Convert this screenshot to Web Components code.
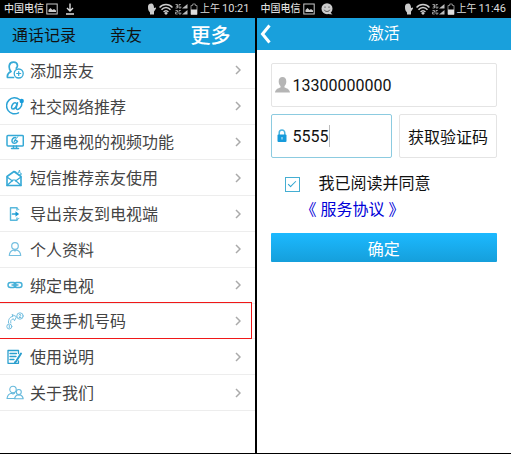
<!DOCTYPE html>
<html lang="zh-CN">
<head>
<meta charset="utf-8">
<meta name="viewport" content="width=device-width, initial-scale=1">
<title>更多 / 激活</title>
<style>
:root {
  --brand: #19a0dc;
  --line: #ededed;
  --text: #444;
}
body {
  margin: 0;
  background: #000;
  font-family: Roboto, "Noto Sans CJK SC", sans-serif;
  font-size: 16px;
  color: #111;
}
.screens {
  display: grid;
  grid-template-columns: 1fr 1fr;
  gap: 2px;
  min-height: 100vh;
  box-sizing: border-box;
  padding-bottom: 1px;
}
</style>
</head>
<body>
<main class="screens">
  <phone-screen time="10:21" notice="download">
    <tab-bar>
      <button>通话记录</button>
      <button>亲友</button>
      <button class="active">更多</button>
    </tab-bar>
    <menu-list>
      <menu-row icon="addFriend">添加亲友</menu-row>
      <menu-row icon="at">社交网络推荐</menu-row>
      <menu-row icon="monitor">开通电视的视频功能</menu-row>
      <menu-row icon="mail">短信推荐亲友使用</menu-row>
      <menu-row icon="exportTo">导出亲友到电视端</menu-row>
      <menu-row icon="person">个人资料</menu-row>
      <menu-row icon="link">绑定电视</menu-row>
      <menu-row icon="swap" marked>更换手机号码</menu-row>
      <menu-row icon="note">使用说明</menu-row>
      <menu-row icon="people">关于我们</menu-row>
    </menu-list>
  </phone-screen>
  <phone-screen time="11:46" notice="smile">
    <title-bar>激活</title-bar>
    <activate-form></activate-form>
  </phone-screen>
</main>

<script>
const line = (color, width) =>
  `fill="none" stroke="${color}" stroke-width="${width}" stroke-linecap="round" stroke-linejoin="round"`;

const ICONS = {
  addFriend: `<g ${line("#35a9d6", 1.7)}><path d="M7.500 16.500H1.500C.8 13.500 2 12 5 10.500C3 8.500 3 6.500 3.300 4.500C4 .2 10.800 0 11.500 4.300C11.500 6 11 6.500 10.300 7.200"/><circle cx="12.700" cy="12.500" r="4.500" stroke-width="1.300"/><path d="M12.700 10.500v4M10.700 12.500h4" stroke-width="1.200"/></g>`,
  at: `<g ${line("#2ba3d6", 1.5)}><path d="M13.500 2.500A8 8 0 1 0 12.500 15.800"/><path d="M11.500 5.800L10.300 10.500C9.800 13 12.300 12.900 14 11C15.500 9.500 16 8 15.800 6.500"/><path d="M10.900 7.500C10.500 5.500 8.200 5.200 6.700 7.200C5 9.500 5.200 12 7 12C8.800 12 10 10.500 10.500 8.500"/></g><circle cx="15.700" cy="4" r="2.200" fill="#179cdb"/>`,
  monitor: `<g ${line("#35a9d6", 1.5)}><rect x="1" y="2.500" width="16.300" height="10.500" rx="1"/><path d="M7.500 13v2M10.500 13v2M5.500 15.500h7"/><path d="M9.500 4.500C7 4.500 5.700 6.300 6 8.300S9.500 11.500 11.500 8.300L9.300 6.800L8.300 8.300"/><path d="M9.500 6L12 3.700" stroke-width="1"/></g>`,
  mail: `<g ${line("#35a9d6", 1.2)}><path d="M1 7.500L8 2.500L15 7.500V16.500H1Z" stroke-width="1.600"/><path d="M1 8l5.500 4M15 8l-5.500 4M1 16.500l6-5.500h2l6 5.500"/><path d="M9.500 2.500L12 4.500 13.500 1l.5 3 1.800 1L13 6" stroke-width=".8"/></g>`,
  exportTo: `<g ${line("#58b8dc", 1.4)}><path d="M11 5V2.800H4.500V15.200H11V13"/><path d="M11 2.800L13 4.800M11 15.200l2-2" stroke-width="1"/><path d="M6.500 9h5" stroke="#2ba3d6" stroke-width="1.700"/></g><path d="M9.500 6.300l3.500 2.700-3.500 2.700z" fill="#1698d2"/>`,
  person: `<g ${line("#74bfe0", 1.2)}><circle cx="9" cy="6" r="3.300"/><path d="M3.300 15.500C3.500 12 5 10.700 7.500 10L9 11l1.500-1C13 10.700 14.500 12 14.700 15.500Z"/></g>`,
  link: `<g ${line("#45b0d8", 1.4)}><rect x="2" y="6.500" width="8" height="5" rx="2.500"/><rect x="8" y="6.500" width="8" height="5" rx="2.500"/><path d="M6 9h6"/></g>`,
  swap: `<g ${line("#74bfe0", 1)}><circle cx="14" cy="4" r="3.200"/><circle cx="3.300" cy="14.500" r="2.500"/><path d="M13 3l1-.7 1 .9-2 2.300h2M3.300 13.300v2.500"/><path d="M2.500 11C2 7.500 4 4.500 7 4.500L6 2.500L10.500 4.700L8.500 8.700L7.500 6.800C5 7.300 4.200 9 4.800 11"/></g>`,
  note: `<g ${line("#2b9fce", 1.3)}><path d="M12.500 13V15.300H2V2.500H12.500V5.500"/><path d="M4 5.500h6.500M4 8.500h6M4 11.500h4"/><path d="M15 5.500L10 13.500l-1 .8" stroke-width="2"/></g>`,
  people: `<g ${line("#66b9dc", 1.1)}><circle cx="7" cy="5.500" r="3.200"/><path d="M9 14.500H1C1.500 11 3 9.700 5.500 9.200L7 10l1.500-.8"/><circle cx="12.800" cy="8" r="2.500"/><path d="M8.500 14.700C9 12 10 11.200 12 10.700l1 .7 1-.7C16 11.500 17 12.500 17.200 14.700Z"/></g>`,
};

// small glyphs used in the phone status strip
const STATUS = {
  picture: '<svg width="12" height="12" viewBox="0 0 12 12"><rect x=".8" y="1" width="10.400" height="10" fill="none" stroke="#ccc"/><path d="M2.500 9V7l2-2 2 2 1.500-1 2 1.500V9z" fill="#ccc"/></svg>',
  download: '<svg width="12" height="12" viewBox="0 0 12 12"><path d="M6 .5v7M3 5l3 3 3-3M2 11h8" fill="none" stroke="#ddd" stroke-width="1.400"/></svg>',
  smile: '<svg width="12" height="12" viewBox="0 0 12 12"><circle cx="6" cy="5.700" r="5.500" fill="#ccc"/><path d="M9 9l2.500 2.500L7 11" fill="#ccc"/><path d="M3.200 6.800c1 2.200 4.600 2.200 5.600 0" fill="none" stroke="#444" stroke-width=".9"/><path d="M4 3.500v1.300M8 3.500v1.300" stroke="#444" stroke-width=".9"/></svg>',
  hand: '<svg width="10" height="12" viewBox="0 0 10 12"><path d="M1 4C1 1 3 .5 4.500 .5S7 2 7 5l2-.5c.5 1-1 2.500-2 4V11.500H3V9.500C1.500 8 1 6.500 1 4z" fill="#ccc"/></svg>',
  wifi: '<svg width="14" height="12" viewBox="0 0 14 12"><g fill="none" stroke="#ccc" stroke-width="1.500"><path d="M.5 4.500C4 .5 10 .5 13.500 4.500M2.500 6.800c2.500-3 6.500-3 9 0M4.600 8.900c1.500-1.700 3.300-1.700 4.800 0"/></g><circle cx="7" cy="10.300" r="1.400" fill="#ccc"/></svg>',
  signal: '<svg width="13" height="12" viewBox="0 0 13 12"><g fill="none" stroke="#bbb" stroke-width=".8"><path d="M.5 1.500h2v3.500h-2M1 3.200h1.500M5.800 1.500H4v3.500h1.800V3.500M.5 7.500h2v1.700h-2V11h2.200M5.800 7.500H4V11h1.800V9.500"/></g><path d="M7 5.500L12.500 1v4.500zM7 11.500L12.500 7v4.500z" fill="#bbb"/></svg>',
  battery: '<svg width="8" height="12" viewBox="0 0 8 12"><path d="M1 2.500h1.700V1h2.600v1.500H7v9H1z" fill="none" stroke="#888"/><path d="M1 6.500h6v5H1z" fill="#ddd"/></svg>',
};

class PhoneScreen extends HTMLElement {
  constructor() {
    super();
    this.attachShadow({ mode: "open" });
  }

  connectedCallback() {
    this.shadowRoot.innerHTML = `
  <style>
:host {
	display: flex;
	flex-direction: column;
	min-width: 0;
	background: #fff;
}

.status {
	display: flex;
	align-items: center;
	justify-content: space-between;
	height: 18px;
	padding: 0 5px 0 4px;
	background: #000;
	color: #ddd;
	font-size: 10px;
	line-height: 18px;
	white-space: nowrap;
}

.status div {
	display: flex;
	align-items: center;
	gap: 2px;
}

.carrier {
	font-weight: 500;
}

.notice {
	display: flex;
	margin-left: 4px;
}

.time {
	font-size: 11px;
}

svg {
	display: block;
}
  </style>
    <div class="status">
        <div>
            <span class="carrier">中国电信</span>
            ${STATUS.picture}
            <span class="notice">${STATUS[this.getAttribute("notice")]}</span>
        </div>
        <div>
            ${STATUS.hand}${STATUS.wifi}${STATUS.signal}${STATUS.battery}
            <span>上午</span>
            <span class="time">${this.getAttribute("time")}</span>
        </div>
    </div>
    <slot></slot>
`;
  }
}

class TabBar extends HTMLElement {
  constructor() {
    super();
    this.attachShadow({ mode: "open" });
    this.shadowRoot.innerHTML = `
  <style>
:host {
	display: flex;
	align-items: center;
	gap: 34px;
	height: 35px;
	padding: 0 24px 0 12px;
	background: var(--brand);
}

::slotted(button) {
	padding: 0;
	border: 0;
	background: none;
	font: inherit;
	line-height: 24px;
	color: #111;
}

::slotted(button.active) {
	margin-left: auto;
	font-size: 20px;
	font-weight: 500;
	color: #fff;
}
  </style>
    <slot></slot>
`;
  }
}

class MenuList extends HTMLElement {
  constructor() {
    super();
    this.attachShadow({ mode: "open" });
    this.shadowRoot.innerHTML = `
  <style>
:host {
	display: grid;
	flex: 1;
	grid-auto-rows: 1fr;
	padding-bottom: 42px;
}
  </style>
    <slot></slot>
`;
  }
}

class MenuRow extends HTMLElement {
  constructor() {
    super();
    this.attachShadow({ mode: "open" });
  }

  connectedCallback() {
    this.shadowRoot.innerHTML = `
  <style>
:host {
	display: block;
	position: relative;
	border-bottom: 1px solid var(--line);
}

/* red frame round the row being pointed out */
:host([marked])::after {
	content: "";
	position: absolute;
	inset: -2px 3px -1px 0;
	border: 1px solid #f01818;
	border-left: 0;
	pointer-events: none;
}

a {
	display: flex;
	align-items: center;
	gap: 6px;
	height: 100%;
	padding: 0 14px 0 6px;
	color: var(--text);
	line-height: 20px;
	text-decoration: none;
	white-space: nowrap;
}

.label {
	flex: 1;
	padding-top: 3px;
}
  </style>
    <a href="#">
        <svg width="18" height="18" viewBox="0 0 18 18">${ICONS[this.getAttribute("icon")]}</svg>
        <span class="label"><slot></slot></span>
        <svg width="6" height="10" viewBox="0 0 6 10"><path d="M1 1l4 4-4 4" fill="none" stroke="#aaa" stroke-width="1.500"/></svg>
    </a>
`;
  }
}

class TitleBar extends HTMLElement {
  constructor() {
    super();
    this.attachShadow({ mode: "open" });
    this.shadowRoot.innerHTML = `
  <style>
:host {
	display: grid;
	grid-template-columns: 24px 1fr 24px;
	align-items: center;
	height: 32px;
	background: var(--brand);
	color: #fff;
}

button {
	display: flex;
	padding: 0 0 0 3px;
	border: 0;
	background: none;
}

h1 {
	margin: 0;
	font-size: 16px;
	font-weight: 400;
	line-height: 26px;
	text-align: center;
}
  </style>
    <button aria-label="返回">
        <svg width="11" height="20" viewBox="0 0 11 20"><path d="M9.500 1.500L2.500 10l7 8.500" fill="none" stroke="#fff" stroke-width="3"/></svg>
    </button>
    <h1><slot></slot></h1>
`;
  }
}

class ActivateForm extends HTMLElement {
  constructor() {
    super();
    this.attachShadow({ mode: "open" });
    this.shadowRoot.innerHTML = `
  <style>
:host {
	display: block;
	padding: 13px 14px;
}

form {
	display: grid;
	grid-template-columns: 1fr 98px;
	gap: 7px;
}

.field {
	display: flex;
	align-items: center;
	box-sizing: border-box;
	height: 44px;
	padding: 0 3px;
	border: 1px solid #e4e4e4;
	border-radius: 2px;
}

.phone,
.consent,
.submit {
	grid-column: 1 / -1;
}

.code {
	border-color: #8ccbe0;
}

.field svg {
	flex: none;
	margin-right: 3px;
}

input,
button {
	font: inherit;
	color: inherit;
}

.field input {
	flex: 1;
	min-width: 0;
	padding: 0;
	border: 0;
	outline: 0;
	background: none;
}

.code input {
	flex: none;
	width: 36px;
}

.caret {
	width: 1px;
	height: 22px;
	background: #bbb;
}

.get-code {
	padding: 0;
	border: 1px solid #e4e4e4;
	border-radius: 2px;
	background: #fff;
}

.consent {
	display: grid;
	grid-template-columns: 16px 1fr;
	column-gap: 18px;
	align-items: center;
	padding: 6px 0 3px 14px;
	line-height: 26px;
}

.consent input {
	appearance: none;
	display: grid;
	place-items: center;
	box-sizing: border-box;
	width: 15px;
	height: 15px;
	margin: 0;
	border: 1px solid #45aed2;
}

.consent input:checked::after {
	content: "";
	width: 7px;
	height: 3px;
	margin-bottom: 3px;
	border: solid #2ba3cf;
	border-width: 0 0 1px 1px;
	transform: rotate(-45deg);
}

.consent a {
	grid-column: 1 / -1;
	justify-self: start;
	margin-left: 16px;
	color: #0000d8;
	text-decoration: none;
}

.submit {
	height: 29px;
	padding: 0;
	border: 0;
	border-radius: 1px;
	background: linear-gradient(#1cb9ff, #159fdb);
	color: #fff;
}
  </style>
    <form>
        <label class="field phone" aria-label="手机号码">
            <svg width="15" height="16" viewBox="0 0 15 16"><path d="M7.500 0C10 0 11.300 1.600 11.300 4.500C11.300 7 10.500 8 9.500 9v1.500C12 11.500 14.500 12 15 15.500H0C.5 12 3 11.500 5.500 10.500V9C4.500 8 3.700 7 3.700 4.500C3.700 1.600 5 0 7.500 0z" fill="#b5b5b5"/></svg>
            <input type="tel" value="13300000000">
        </label>
        <label class="field code" aria-label="验证码">
            <svg width="15" height="14" viewBox="0 0 15 14"><path d="M4.200 6V4c0-4 5.600-4 5.600 0v2" fill="none" stroke="#4ab4e0" stroke-width="1.500"/><rect x="2.500" y="5.500" width="9" height="7.500" rx="1" fill="#169bdb"/><path d="M7 8v2.500" stroke="#a9dcf3" stroke-width="1.300"/></svg>
            <input inputmode="numeric" value="5555">
            <span class="caret"></span>
        </label>
        <button class="get-code" type="button">获取验证码</button>
        <div class="consent">
            <input type="checkbox" id="agree" checked>
            <label for="agree">我已阅读并同意</label>
            <a href="#">《 服务协议 》</a>
        </div>
        <button class="submit" type="button">确定</button>
    </form>
`;
  }
}

customElements.define("phone-screen", PhoneScreen);
customElements.define("tab-bar", TabBar);
customElements.define("menu-list", MenuList);
customElements.define("menu-row", MenuRow);
customElements.define("title-bar", TitleBar);
customElements.define("activate-form", ActivateForm);
</script>
</body>
</html>
